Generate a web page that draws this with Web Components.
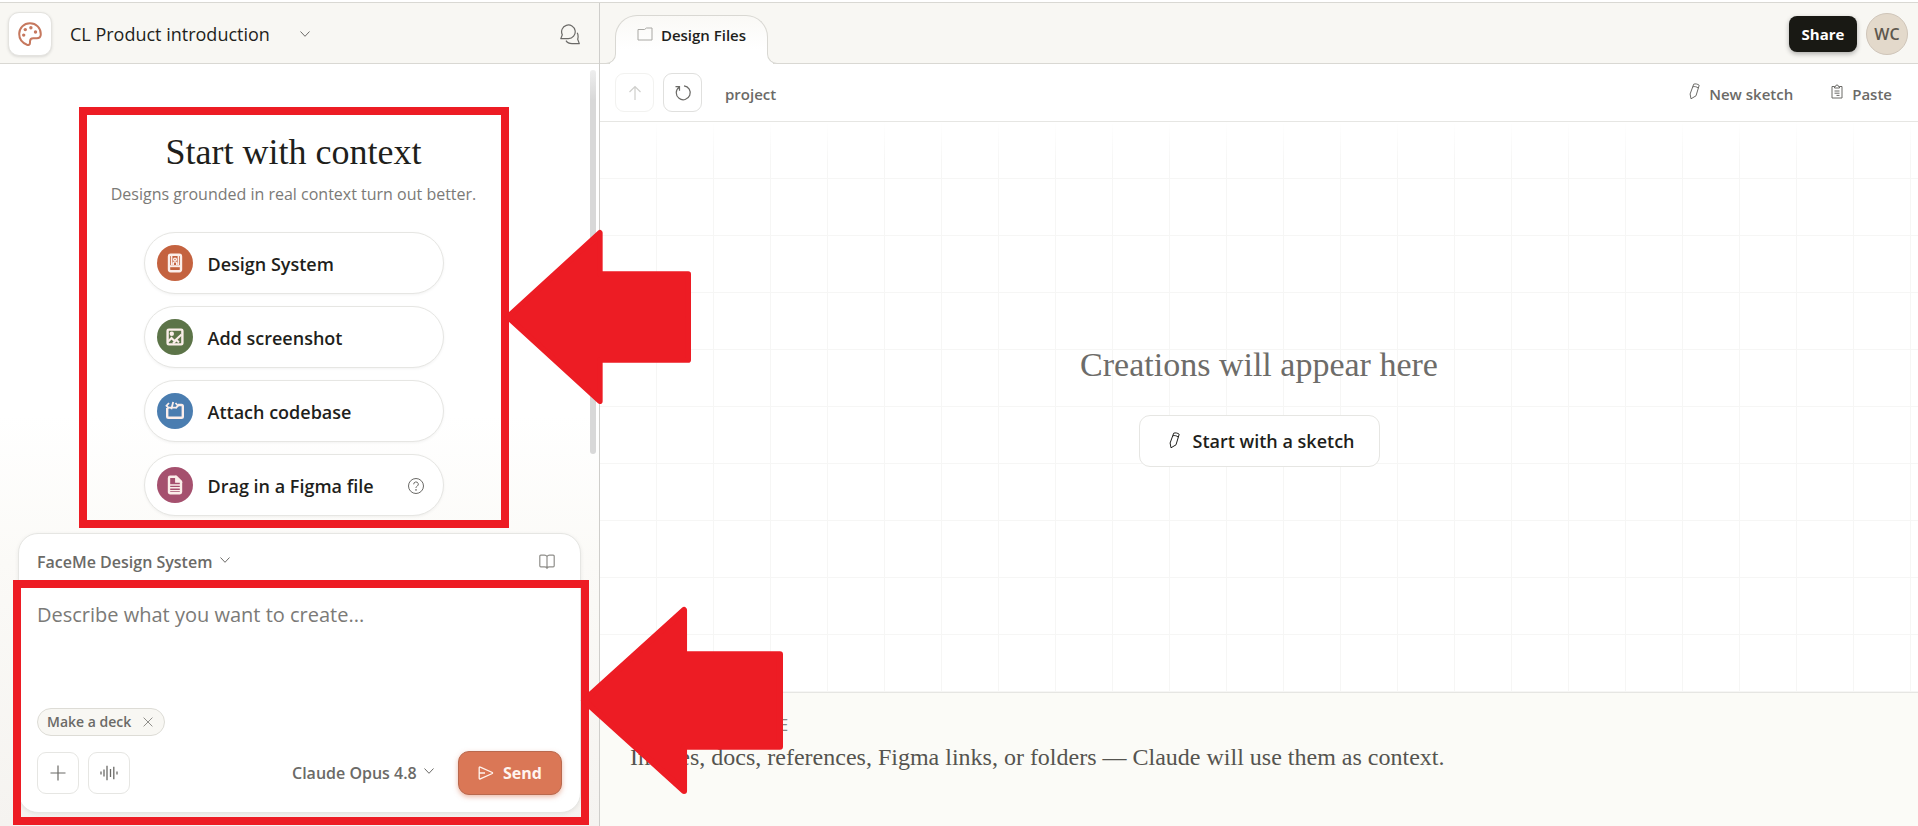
<!DOCTYPE html>
<html lang="en">
<head>
<meta charset="utf-8">
<title>CL Product introduction</title>
<style>
    html, body {
        margin: 0;
        height: 100%;
    }
    body {
        --sans: "Open Sans", "Noto Sans", sans-serif;
        --serif: "Liberation Serif", serif;
        --bar: #f8f7f3;
        --line: #d9d8d3;
        --soft-line: #e6e6e3;
        --ink: #1f1f1c;
        --muted: #6b6a67;
        --marker: #ed1c24;
        box-sizing: border-box;
        padding-top: 2px;
        background: #fff;
        color: var(--ink);
        font-family: var(--sans);
        font-size: 16px;
    }
</style>
</head>
<body>
<studio-app></studio-app>

<script>
const icons = {
    palette: ['0 0 24 24', `<g fill="none" stroke="currentColor" stroke-width="2"><path d="M12 1.2C5.8 1.2 1.2 6 1.2 12.1c0 5 3.3 8.900 7.800 10.700 1.800.6 3-.3 3-2.100v-1.200c0-2.100 1.200-3.300 3.200-3.300h3.600c2.400 0 4-1.700 4-4C22.800 5.900 18.200 1.200 12 1.200z"/></g><g fill="currentColor"><circle cx="7.3" cy="7.600" r="1.700"/><circle cx="12.900" cy="5.700" r="1.700"/><circle cx="17.500" cy="10" r="1.700"/><circle cx="5.700" cy="13.100" r="1.700"/></g>`],
    chevron: ['0 0 10 6', `<path d="M.5.5 5 5.300 9.500.5" fill="none" stroke="currentColor"/>`],
    chats: ['0 0 20 21', `<g fill="none" stroke="currentColor" stroke-width="1.2" stroke-linejoin="round"><path d="M.8 14.600h7.700a6.800 6.800 0 1 0-6.200-3.800z"/><path d="M17.200 8.800c1 1.800 1.100 4.200.5 6.400l1.600 4.400h-7.300c-2.800 0-4.800-1-6-3"/></g>`],
    folder: ['0 0 16 14', `<path d="M1 2.500h6.500L9.500 1H15v12H1z" fill="none" stroke="currentColor"/>`],
    up: ['0 0 14 16', `<path d="M7 15V1.500M1.500 7 7 1.500 12.500 7" fill="none" stroke="currentColor" stroke-width="1.2"/>`],
    reload: ['0 0 18 18', `<path d="M5 3.200a7 7 0 1 0 5-1.400M1.500 2.700h4v4" fill="none" stroke="currentColor" stroke-width="1.200"/>`],
    pencil: ['0 0 11 17', `<g fill="none" stroke="currentColor" stroke-linejoin="round"><path d="M4.700 1.200c1.700-.7 3.900-.2 5.500 1.100L7 12.800 2 15.800 1.100 11z"/><path d="M3.900 3.800c1.600-.6 3.800-.1 5.200 1.200"/></g>`],
    paste: ['0 0 12 15', `<path d="M3.500 2.500H1v11.500h10V2.500H8.500M3.500 4V2.500h1a1.500 1.500 0 0 1 3 0h1V4zM3.500 7h5M3.500 9.200h5M5.500 11.400h3" fill="none" stroke="currentColor"/>`],
    book: ['0 0 16 16', `<path d="M8 2.500C7.500 1.600 6.700 1.200 5.500 1.200H1.800a1 1 0 0 0-1 1v9.600a1 1 0 0 0 1 1h3.700c1.200 0 2 .4 2.500 1.200.5-.8 1.300-1.200 2.500-1.200h3.700a1 1 0 0 0 1-1V2.200a1 1 0 0 0-1-1h-3.700C9.300 1.200 8.500 1.600 8 2.500zV15" fill="none" stroke="currentColor" stroke-width="1.200"/>`],
    plus: ['0 0 16 16', `<path d="M8 .5v15M.5 8h15" fill="none" stroke="currentColor" stroke-width="1.200"/>`],
    wave: ['0 0 18 16', `<path d="M1 6.500v3M4 4.500v7M7 .8v14.400M10.500 4v8M13.800 1.800v12.400M17 6.500v3" fill="none" stroke="currentColor" stroke-width="1.300"/>`],
    close: ['0 0 10 10', `<path d="m.6.6 8.800 8.800M9.400.6.6 9.400" fill="none" stroke="currentColor"/>`],
    send: ['0 0 16 14', `<path d="M1.200 1.700v10.600c0 .6.6.9 1.100.6l12-5.400a.6.6 0 0 0 0-1L2.300 1.100c-.5-.3-1.100 0-1.100.6zM1.500 7h5.500" fill="none" stroke="currentColor" stroke-width="1.300"/>`],
    help: ['0 0 18 18', `<g fill="none" stroke="currentColor"><circle cx="9" cy="9" r="7.500"/><path d="M6.700 7.300a2.300 2.300 0 1 1 3.500 1.900C9.300 9.700 9 10 9 11"/></g><circle cx="9" cy="12.900" r=".8" fill="currentColor"/>`],
    system: ['0 0 20 20', `<rect x="4" y="1.800" width="12" height="16.400" rx="1.600" fill="none" stroke="currentColor" stroke-width="2.400"/><path d="M4 13.200h12" stroke="currentColor" stroke-width="2"/><g fill="none" stroke="currentColor" stroke-width="1.400"><path d="M6.700 3v9M13.300 3v9M8.300 12V9.800c0-1.300 3.400-1.300 3.400 0V12"/><circle cx="10" cy="6.500" r="1.400"/></g>`],
    image: ['0 0 20 20', `<rect x="2.600" y="2.600" width="14.800" height="14.800" rx="1.200" fill="none" stroke="currentColor" stroke-width="2.400"/><circle cx="6.800" cy="6.800" r="2.200" fill="currentColor"/><path d="M3 14.800 6.500 11l3 3L16.500 7.500M8 16.500l3.500-3.500 2.500 2.500" fill="none" stroke="currentColor" stroke-width="2"/>`],
    code: ['0 0 20 20', `<path d="M2.200 7v8.500c0 .8.500 1.300 1.300 1.300h13c.8 0 1.300-.5 1.300-1.300V5.300c0-.8-.5-1.300-1.300-1.300H13" fill="none" stroke="currentColor" stroke-width="2.400"/><path d="M4 2 1.500 4.700 4 7.400M10.500 2 13 4.700l-2.500 2.700M8.200 1 6.300 8.300M3 6.600h8" fill="none" stroke="currentColor" stroke-width="1.800"/>`],
    file: ['0 0 20 20', `<path d="M4 3c0-.7.500-1.200 1.200-1.200h6L16 6.500V17c0 .7-.5 1.200-1.200 1.200H5.200c-.7 0-1.200-.5-1.200-1.200z" fill="none" stroke="currentColor" stroke-width="2.400"/><path d="M10.800 2v5H16zM5 10h10M5 12.800h10M5 15.600h10" fill="currentColor" stroke="currentColor" stroke-width="1.400"/>`]
};

class IconGlyph extends HTMLElement {

    constructor() {
        super();
        this.attachShadow({ mode: 'open' });
    }

    connectedCallback() {
        const [box, shape] = icons[this.getAttribute('name')];
        const [, , w, h] = box.split(' ');
        this.shadowRoot.innerHTML = `
            <style>
                :host { display: inline-flex; flex: none; }
                svg { display: block; }
            </style>
            <svg viewBox="${box}" width="${w}" height="${h}" aria-hidden="true">${shape}</svg>
        `;
    }

}

// Left pointing arrow, placed by its parent over the content
class CalloutArrow extends HTMLElement {

    constructor() {
        super();
        this.attachShadow({ mode: 'open' }).innerHTML = `
            <style>
                :host { display: block; pointer-events: none; }
                svg { display: block; width: 100%; height: 100%; overflow: visible; }
                path { fill: var(--marker); stroke: var(--marker); stroke-width: 6; stroke-linejoin: round; }
            </style>
            <svg viewBox="0 0 200 186" preserveAspectRatio="none" aria-hidden="true">
                <path d="M3 93 102 3v44h95v92h-95v44z"/>
            </svg>
        `;
    }

}

class ProjectHeader extends HTMLElement {

    constructor() {
        super();
        this.attachShadow({ mode: 'open' }).innerHTML = `
            <style>
                :host {
                    display: flex;
                    align-items: center;
                    box-sizing: border-box;
                    height: 61px;
                    padding: 2px 19px 0 8px;
                    background: var(--bar);
                    border-bottom: 1px solid var(--line);
                }
                button {
                    display: flex;
                    align-items: center;
                    justify-content: center;
                    padding: 0;
                    border: 0;
                    background: none;
                    color: var(--muted);
                }
                .home {
                    width: 44px;
                    height: 44px;
                    border: 1px solid #e4e3df;
                    border-radius: 11px;
                    background: #fff;
                    color: #c6785e;
                    box-shadow: 0 1px 3px #0000001f;
                }
                h1 {
                    margin: 0 30px 0 18px;
                    font-size: 18px;
                    font-weight: 400;
                    line-height: 24px;
                }
                .chats { margin-left: auto; }
            </style>
            <button class="home" aria-label="Home"><icon-glyph name="palette"></icon-glyph></button>
            <h1>CL Product introduction</h1>
            <button aria-label="Project menu"><icon-glyph name="chevron"></icon-glyph></button>
            <button class="chats" aria-label="Chats"><icon-glyph name="chats"></icon-glyph></button>
        `;
    }

}

class StarterPill extends HTMLElement {

    constructor() {
        super();
        this.attachShadow({ mode: 'open' });
    }

    connectedCallback() {
        this.shadowRoot.innerHTML = `
            <style>
                :host { display: block; }
                button {
                    display: flex;
                    align-items: center;
                    gap: 15px;
                    box-sizing: border-box;
                    width: 100%;
                    height: 62px;
                    padding: 0 18px 0 12px;
                    border: 1px solid var(--soft-line);
                    border-radius: 31px;
                    background: #fff;
                    color: var(--ink);
                    font: 600 18px/24px var(--sans);
                    text-align: left;
                    box-shadow: 0 1px 3px #0000000d;
                }
                .dot {
                    display: flex;
                    align-items: center;
                    justify-content: center;
                    width: 36px;
                    height: 36px;
                    border-radius: 50%;
                    background: ${this.getAttribute('tint')};
                    color: #fbeeea;
                }
                ::slotted(icon-glyph) { margin-left: auto; color: var(--muted); }
                .text { flex: 1; display: flex; align-items: center; padding-top: 2px; }
            </style>
            <button>
                <span class="dot"><icon-glyph name="${this.getAttribute('icon')}"></icon-glyph></span>
                <span class="text"><slot></slot></span>
            </button>
        `;
    }

}

class StarterPanel extends HTMLElement {

    constructor() {
        super();
        this.attachShadow({ mode: 'open' }).innerHTML = `
            <style>
                :host {
                    display: flex;
                    flex: 1;
                    flex-direction: column;
                    align-items: center;
                    position: relative;
                    padding: 68px 12px 0 0;
                }
                h2 {
                    margin: 0;
                    font: 400 36px/40px var(--serif);
                }
                p {
                    margin: 10px 0 26px;
                    color: #7b7a77;
                    font-size: 16px;
                    line-height: 24px;
                }
                .list {
                    display: grid;
                    gap: 12px;
                    width: 300px;
                }
                .thumb {
                    position: absolute;
                    top: 6px;
                    right: 3px;
                    width: 6px;
                    height: 384px;
                    border-radius: 3px;
                    background: linear-gradient(#eee, #d8d8d8 30px);
                }
                .frame {
                    position: absolute;
                    top: 43px;
                    left: 79px;
                    box-sizing: border-box;
                    width: 430px;
                    height: 421px;
                    border: 8px solid var(--marker);
                    pointer-events: none;
                }
                callout-arrow {
                    position: absolute;
                    top: 166px;
                    left: 505px;
                    width: 186px;
                    height: 174px;
                }
            </style>
            <h2>Start with context</h2>
            <p>Designs grounded in real context turn out better.</p>
            <div class="list">
                <starter-pill icon="system" tint="#c4623f">Design System</starter-pill>
                <starter-pill icon="image" tint="#5c7448">Add screenshot</starter-pill>
                <starter-pill icon="code" tint="#4a7db0">Attach codebase</starter-pill>
                <starter-pill icon="file" tint="#a5506e">Drag in a Figma file<icon-glyph name="help"></icon-glyph></starter-pill>
            </div>
            <div class="thumb"></div>
            <div class="frame"></div>
            <callout-arrow></callout-arrow>
        `;
    }

}

class PromptComposer extends HTMLElement {

    constructor() {
        super();
        this.attachShadow({ mode: 'open' }).innerHTML = `
            <style>
                :host {
                    display: block;
                    position: relative;
                    padding: 0 18px 13px;
                }
                .card {
                    display: flex;
                    flex-direction: column;
                    padding: 10px 18px 17px;
                    border: 1px solid var(--soft-line);
                    border-radius: 20px;
                    background: #fff;
                    box-shadow: 0 1px 4px #00000012;
                }
                .row {
                    display: flex;
                    align-items: center;
                }
                label {
                    display: flex;
                    align-items: center;
                    gap: 7px;
                    color: var(--muted);
                }
                select {
                    appearance: none;
                    padding: 0;
                    border: 0;
                    background: none;
                    color: inherit;
                    font: 600 16px/24px var(--sans);
                }
                label icon-glyph { padding-bottom: 4px; }
                button {
                    display: flex;
                    align-items: center;
                    justify-content: center;
                    box-sizing: border-box;
                    padding: 0;
                    border: 0;
                    background: none;
                    color: var(--muted);
                }
                .top {
                    justify-content: space-between;
                    height: 36px;
                    padding-right: 7px;
                }
                .top button { color: #8f8e8a; }
                textarea {
                    box-sizing: border-box;
                    width: 100%;
                    height: 128px;
                    padding: 21px 0 0;
                    border: 0;
                    outline: 0;
                    resize: none;
                    background: none;
                    font: 400 20px/28px var(--sans);
                }
                textarea::placeholder { color: #7b7a77; }
                .chip {
                    display: flex;
                    align-items: center;
                    align-self: flex-start;
                    gap: 12px;
                    height: 26px;
                    padding: 0 11px 0 9px;
                    border: 1px solid #dddcd6;
                    border-radius: 14px;
                    background: var(--bar);
                    color: var(--muted);
                    font-size: 14px;
                    font-weight: 600;
                    line-height: 20px;
                }
                .chip button { color: #8f8e8a; }
                .actions {
                    gap: 9px;
                    margin-top: 15px;
                }
                .square {
                    width: 42px;
                    height: 42px;
                    border: 1px solid var(--soft-line);
                    border-radius: 9px;
                }
                .actions label { margin-left: auto; }
                .send {
                    gap: 9px;
                    width: 104px;
                    height: 44px;
                    margin-left: 15px;
                    border: 1px solid #b9694e;
                    border-radius: 11px;
                    background: #da7756;
                    color: #fff4ee;
                    font: 700 16px/24px var(--sans);
                    box-shadow: 0 2px 5px #da775680;
                }
                .frame {
                    position: absolute;
                    inset: 47px 10px 1px 13px;
                    border: 8px solid var(--marker);
                    pointer-events: none;
                }
                callout-arrow {
                    position: absolute;
                    right: -184px;
                    bottom: 32px;
                    width: 202px;
                    height: 187px;
                }
            </style>
            <div class="card">
                <div class="row top">
                    <label>
                        <select aria-label="Design system"><option>FaceMe Design System</option></select>
                        <icon-glyph name="chevron"></icon-glyph>
                    </label>
                    <button aria-label="Library"><icon-glyph name="book"></icon-glyph></button>
                </div>
                <textarea aria-label="Prompt" placeholder="Describe what you want to create..."></textarea>
                <div class="chip">Make a deck<button aria-label="Remove"><icon-glyph name="close"></icon-glyph></button></div>
                <div class="row actions">
                    <button class="square" aria-label="Add"><icon-glyph name="plus"></icon-glyph></button>
                    <button class="square" aria-label="Voice"><icon-glyph name="wave"></icon-glyph></button>
                    <label>
                        <select aria-label="Model"><option>Claude Opus 4.8</option></select>
                        <icon-glyph name="chevron"></icon-glyph>
                    </label>
                    <button class="send"><icon-glyph name="send"></icon-glyph>Send</button>
                </div>
            </div>
            <div class="frame"></div>
            <callout-arrow></callout-arrow>
        `;
    }

}

class TabStrip extends HTMLElement {

    constructor() {
        super();
        this.attachShadow({ mode: 'open' }).innerHTML = `
            <style>
                :host {
                    display: flex;
                    align-items: center;
                    gap: 9px;
                    box-sizing: border-box;
                    height: 61px;
                    padding: 2px 10px 0 15px;
                    background: var(--bar);
                    border-bottom: 1px solid var(--line);
                }
                .tab {
                    display: flex;
                    align-items: center;
                    justify-content: center;
                    gap: 8px;
                    position: relative;
                    align-self: flex-end;
                    box-sizing: border-box;
                    width: 153px;
                    height: 49px;
                    margin: 0 auto -1px 0;
                    padding: 0 0 11px;
                    border: 1px solid var(--line);
                    border-bottom: 0;
                    border-radius: 22px 22px 0 0;
                    background: linear-gradient(#faf9f6, #fff 70%);
                    color: var(--ink);
                    font: 600 15px/24px var(--sans);
                }
                .tab icon-glyph { padding-bottom: 2px; color: #a9a8a4; }
                /* feet that run out into the bar's bottom line */
                .tab::before, .tab::after {
                    content: "";
                    position: absolute;
                    bottom: 0;
                    width: 9px;
                    height: 12px;
                    border-bottom: 1px solid var(--line);
                    background: var(--bar);
                }
                .tab::before {
                    right: 100%;
                    border-right: 1px solid var(--line);
                    border-radius: 0 0 10px;
                    box-shadow: 4px 2px #fff;
                    clip-path: inset(0 -1px 0 0);
                }
                .tab::after {
                    left: 100%;
                    border-left: 1px solid var(--line);
                    border-radius: 0 0 0 10px;
                    box-shadow: -4px 2px #fff;
                    clip-path: inset(0 0 0 -1px);
                }
                .share {
                    width: 68px;
                    height: 36px;
                    padding: 0;
                    border: 0;
                    border-radius: 8px;
                    background: #191914;
                    color: #fff;
                    font: 700 15px/24px var(--sans);
                    box-shadow: 0 2px 5px #0000004d;
                }
                .avatar {
                    width: 42px;
                    height: 42px;
                    padding: 0;
                    border: 1px solid #cfc5b9;
                    border-radius: 50%;
                    background: #e3d9cb;
                    color: #5d574e;
                    font: 600 16px/24px var(--sans);
                }
            </style>
            <button class="tab"><icon-glyph name="folder"></icon-glyph>Design Files</button>
            <button class="share">Share</button>
            <button class="avatar">WC</button>
        `;
    }

}

class FileToolbar extends HTMLElement {

    constructor() {
        super();
        this.attachShadow({ mode: 'open' }).innerHTML = `
            <style>
                :host {
                    display: flex;
                    align-items: center;
                    box-sizing: border-box;
                    height: 58px;
                    padding: 0 26px 0 15px;
                    border-bottom: 1px solid var(--soft-line);
                    color: var(--muted);
                    font-size: 15px;
                    font-weight: 600;
                    line-height: 24px;
                }
                button {
                    display: flex;
                    align-items: center;
                    justify-content: center;
                    gap: 9px;
                    padding: 0;
                    border: 0;
                    background: none;
                    color: inherit;
                    font: inherit;
                }
                .square {
                    box-sizing: border-box;
                    width: 39px;
                    height: 39px;
                    margin-right: 9px;
                    border: 1px solid #e0e0de;
                    border-radius: 9px;
                }
                .square:disabled {
                    border-color: #f2f2f0;
                    color: #cfcfcc;
                }
                .path { margin: 0 auto 0 14px; }
                .path, .sketch, .paste { padding-top: 2px; }
                .sketch icon-glyph, .paste icon-glyph { padding-bottom: 4px; }
                .paste { margin-left: 38px; }
            </style>
            <button class="square" aria-label="Up" disabled><icon-glyph name="up"></icon-glyph></button>
            <button class="square" aria-label="Reload"><icon-glyph name="reload"></icon-glyph></button>
            <span class="path">project</span>
            <button class="sketch"><icon-glyph name="pencil"></icon-glyph>New sketch</button>
            <button class="paste"><icon-glyph name="paste"></icon-glyph>Paste</button>
        `;
    }

}

class CreationsCanvas extends HTMLElement {

    constructor() {
        super();
        this.attachShadow({ mode: 'open' }).innerHTML = `
            <style>
                :host {
                    display: flex;
                    flex: 1;
                    flex-direction: column;
                    align-items: center;
                    justify-content: center;
                    gap: 30px;
                    padding-bottom: 2px;
                    background:
                        linear-gradient(#fff, transparent 40px),
                        linear-gradient(90deg, transparent 56px, #f6f6f5 56px) 0 0 / 57px 57px,
                        linear-gradient(transparent 56px, #f6f6f5 56px) 0 0 / 57px 57px;
                }
                h2 {
                    margin: 0;
                    color: #6d6c69;
                    font: 400 34px/40px var(--serif);
                }
                button {
                    display: flex;
                    align-items: center;
                    gap: 13px;
                    box-sizing: border-box;
                    height: 52px;
                    padding: 0 24px 0 29px;
                    border: 1px solid var(--soft-line);
                    border-radius: 11px;
                    background: #fff;
                    color: var(--ink);
                    font: 600 18px/24px var(--sans);
                }
                icon-glyph { padding-bottom: 2px; }
            </style>
            <h2>Creations will appear here</h2>
            <button><icon-glyph name="pencil"></icon-glyph>Start with a sketch</button>
        `;
    }

}

class DropZone extends HTMLElement {

    constructor() {
        super();
        this.attachShadow({ mode: 'open' }).innerHTML = `
            <style>
                :host {
                    display: block;
                    box-sizing: border-box;
                    min-height: 134px;
                    padding: 22px 30px;
                    border-top: 1px solid var(--soft-line);
                    background: #fbfbf7;
                }
                h3 {
                    margin: 0 0 6px;
                    color: #8a8985;
                    font-size: 16px;
                    font-weight: 500;
                    letter-spacing: 2px;
                    line-height: 20px;
                }
                p {
                    margin: 0;
                    color: #55544f;
                    font: 400 24px/32px var(--serif);
                }
            </style>
            <h3>DROP FILES HERE</h3>
            <p>Images, docs, references, Figma links, or folders — Claude will use them as context.</p>
        `;
    }

}

class StudioApp extends HTMLElement {

    constructor() {
        super();
        this.attachShadow({ mode: 'open' }).innerHTML = `
            <style>
                :host {
                    display: grid;
                    grid-template-columns: 600px 1fr;
                    box-sizing: border-box;
                    min-height: 100%;
                    border-top: 1px solid var(--line);
                }
                section {
                    display: flex;
                    flex-direction: column;
                    min-width: 0;
                }
                .chat {
                    position: relative;
                    z-index: 1;
                    box-sizing: border-box;
                    border-right: 1px solid #cfcecb;
                    background: linear-gradient(#fff 50%, #fbfaf7 68%, #f5f3f0);
                }
            </style>
            <section class="chat">
                <project-header></project-header>
                <starter-panel></starter-panel>
                <prompt-composer></prompt-composer>
            </section>
            <section>
                <tab-strip></tab-strip>
                <file-toolbar></file-toolbar>
                <creations-canvas></creations-canvas>
                <drop-zone></drop-zone>
            </section>
        `;
    }

}

customElements.define('icon-glyph', IconGlyph);
customElements.define('callout-arrow', CalloutArrow);
customElements.define('project-header', ProjectHeader);
customElements.define('starter-pill', StarterPill);
customElements.define('starter-panel', StarterPanel);
customElements.define('prompt-composer', PromptComposer);
customElements.define('tab-strip', TabStrip);
customElements.define('file-toolbar', FileToolbar);
customElements.define('creations-canvas', CreationsCanvas);
customElements.define('drop-zone', DropZone);
customElements.define('studio-app', StudioApp);
</script>
</body>
</html>
